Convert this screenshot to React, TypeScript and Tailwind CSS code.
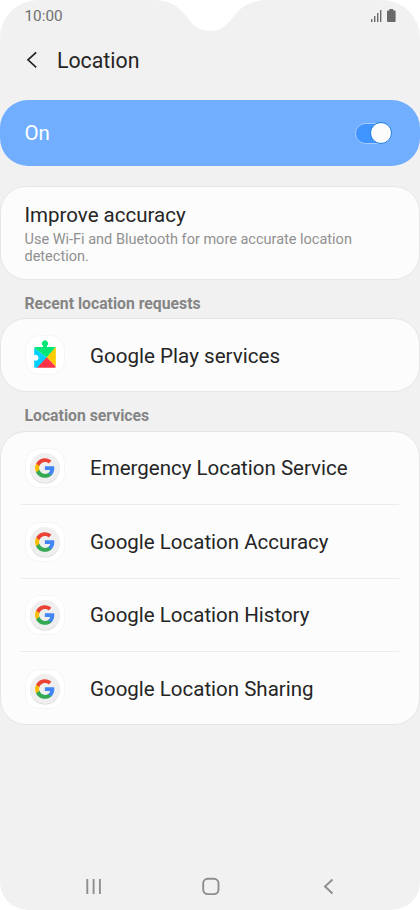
const services = [
  "Emergency Location Service",
  "Google Location Accuracy",
  "Google Location History",
  "Google Location Sharing",
];

function GoogleIcon() {
  return (
    <svg width="40" height="40" viewBox="0 0 40 40" className="shrink-0">
      <rect x="0.5" y="0.5" width="39" height="39" rx="14" fill="#fff" stroke="#f5f5f5" />
      <circle cx="20" cy="20.8" r="14.8" fill="#d2d2d2" />
      <circle cx="20" cy="20" r="15" fill="#efefef" />
      <g transform="translate(9.2 9.3) scale(0.89)">
        <path d="M22.56 12.25c0-.78-.07-1.53-.2-2.25H12v4.26h5.92a5.06 5.06 0 0 1-2.2 3.32v2.77h3.57c2.08-1.92 3.27-4.74 3.27-8.1z" fill="#4285f4" />
        <path d="M12 23c2.97 0 5.46-.98 7.28-2.66l-3.57-2.77c-.98.66-2.23 1.06-3.71 1.06-2.86 0-5.29-1.93-6.16-4.53H2.18v2.84C3.99 20.53 7.7 23 12 23z" fill="#34a853" />
        <path d="M5.84 14.09a6.6 6.6 0 0 1 0-4.18V7.07H2.18a11 11 0 0 0 0 9.86l3.66-2.84z" fill="#fbbc05" />
        <path d="M12 5.38c1.62 0 3.06.56 4.21 1.64l3.15-3.15C17.45 2.09 14.97 1 12 1 7.7 1 3.99 3.47 2.18 7.07l3.66 2.84C6.71 7.31 9.14 5.38 12 5.38z" fill="#ea4335" />
      </g>
    </svg>
  );
}

function PlayServicesIcon() {
  return (
    <svg width="40" height="40" viewBox="0 0 40 40" className="shrink-0">
      <rect x="0.5" y="0.5" width="39" height="39" rx="14" fill="#fff" stroke="#f5f5f5" />
      <path d="M9.200 13 22 22.500 12.500 32.700H10.200a1 1 0 0 1-1-1V25.300a2.900 2.900 0 1 0 0-5z" fill="#00d0ff" />
      <path d="M9.300 13a1 1 0 0 1 1-1h7.700V10.700a3 3 0 1 1 4 0V12h7.800a1 1 0 0 1 .8.400L22 22.500z" fill="#00e676" />
      <path d="M30.500 12.300q.3.300.3.800v18.500L21.800 22.300z" fill="#ffcb00" />
      <path d="M21.800 22.300 30.800 31.700a1 1 0 0 1-1 1H12z" fill="#ff3347" />
    </svg>
  );
}

export default function App() {
  return (
    <div className="relative flex h-[910px] w-[420px] flex-col overflow-hidden rounded-t-[38px] rounded-b-[28px] bg-[#f1f1f1] font-['Roboto',sans-serif] text-[#252525]">
      {/* Camera notch */}
      <svg width="110" height="31" viewBox="0 0 110 31" className="absolute top-0 left-[155px]">
        <path d="M0 0C14 1 21 5 28 12.500C35 20 40 31 55 31S75 20 82 12.500C89 5 96 1 110 0z" fill="#fff" />
      </svg>

      <header className="flex h-8 shrink-0 items-center justify-between pr-6 pl-[24.500px]">
        <span className="text-[15.300px] text-[#707070]">10:00</span>
        <svg width="26" height="14" viewBox="0 0 26 14" fill="#696969">
          <path d="M1 10h1.400v3H1zM4 7h1.400v6H4zM7 4h1.400v9H7zM10 1h1.400v12H10z" />
          <path d="M19.400 0h3.800v1.500h1.600q.8 0 .8.800V12q0 1-1 1h-6.600q-1 0-1-1V2.300q0-.8.800-.8h1.600z" />
        </svg>
      </header>

      <div className="flex h-[68px] shrink-0 items-center pb-3 pl-[26px]">
        <svg width="12" height="18" viewBox="0 0 12 18" fill="none" stroke="#252525" strokeWidth="1.700">
          <path d="M10.200 1.300 2 8.800l8.200 7.500" />
        </svg>
        <h1 className="mt-px ml-[19px] text-[21.300px] leading-[31px]">Location</h1>
      </div>

      <div className="flex h-[66px] shrink-0 items-center justify-between rounded-[28px] bg-[#72aeff] pr-[28px] pl-[24.500px] text-white">
        <span className="text-[20.500px]">On</span>
        <div className="flex h-[21px] w-[37px] items-center justify-end rounded-full border border-[#a4cbff] bg-[#4094ff]">
          <div className="-mr-px size-[22px] shrink-0 rounded-full border border-[#1b7ddd] bg-[#fcfcfc]" />
        </div>
      </div>

      <section className="mt-5 h-[94px] shrink-0 rounded-[26px] border border-[#e6e6e6] bg-[#fcfcfc] px-[23.500px] pt-[15px]">
        <h2 className="text-[20.500px] leading-[26px]">Improve accuracy</h2>
        <p className="mt-[3px] w-[350px] text-[14.500px] leading-[17px] text-[#909090]">
          Use Wi-Fi and Bluetooth for more accurate location detection.
        </p>
      </section>

      <h3 className="mt-3 h-[26px] shrink-0 pl-[24.500px] text-[15.750px] leading-[23px] font-bold text-[#858585]">
        Recent location requests
      </h3>
      <section className="flex h-[74px] shrink-0 items-center rounded-[26px] border border-[#e6e6e6] bg-[#fcfcfc] pl-6">
        <PlayServicesIcon />
        <span className="mt-[2px] ml-[25px] text-[20.600px] leading-[30px]">Google Play services</span>
      </section>

      <h3 className="mt-3 h-[27px] shrink-0 pl-[24.500px] text-[15.750px] leading-[24px] font-bold text-[#858585]">
        Location services
      </h3>
      <section className="h-[294px] shrink-0 rounded-[26px] border border-[#e6e6e6] bg-[#fcfcfc] px-5">
        {services.map((name) => (
          <div key={name} className="flex h-[73.400px] items-center border-b border-[#ebebeb] pl-1 last:h-[73px] last:border-0">
            <GoogleIcon />
            <span className="mt-px ml-[25px] text-[20.500px]">{name}</span>
          </div>
        ))}
      </section>

      <nav className="mt-auto flex h-[47px] shrink-0 items-start pl-[85px]">
        <svg width="18" height="46" viewBox="0 0 18 46" fill="none" stroke="#8e8e8e" strokeWidth="1.900">
          <path d="M2.300 16v15M8.600 16v15M14.900 16v15" />
        </svg>
        <svg width="18" height="46" viewBox="0 0 18 46" fill="none" stroke="#8e8e8e" strokeWidth="1.900" className="ml-[99px]">
          <rect x="1.200" y="15.800" width="15.300" height="15.300" rx="4.500" />
        </svg>
        <svg width="12" height="46" viewBox="0 0 12 46" fill="none" stroke="#8e8e8e" strokeWidth="1.900" className="ml-[102px]">
          <path d="M10.500 16.500 3 23.500l7.500 7" />
        </svg>
      </nav>
    </div>
  );
}
